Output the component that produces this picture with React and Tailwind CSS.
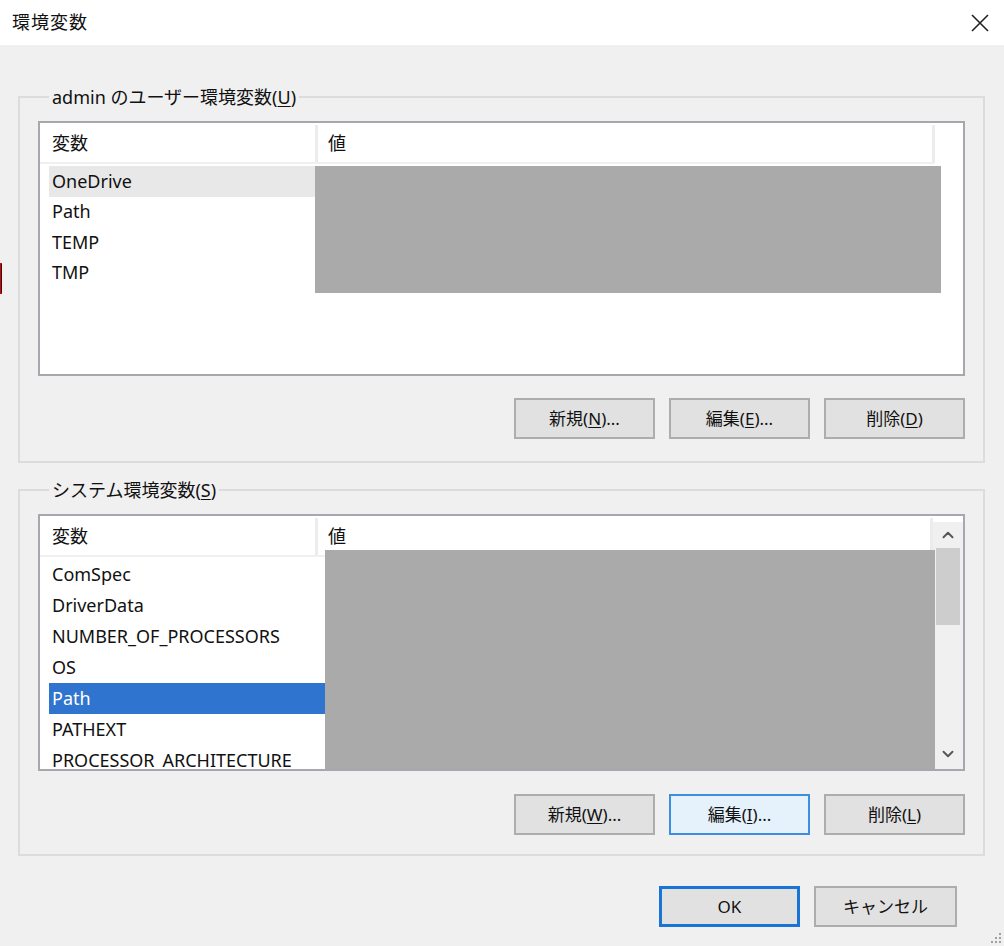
import { ChevronUp, ChevronDown } from "lucide-react"

const userVars = ["OneDrive", "Path", "TEMP", "TMP"]
const systemVars = [
  "ComSpec",
  "DriverData",
  "NUMBER_OF_PROCESSORS",
  "OS",
  "Path",
  "PATHEXT",
  "PROCESSOR_ARCHITECTURE",
]

function Mnemonic({ label, keyChar, dots }) {
  return (
    <span>
      {label}(<span className="underline underline-offset-2">{keyChar}</span>){dots ? "..." : ""}
    </span>
  )
}

function DialogButton({ children, variant = "normal", className = "" }) {
  const styles = {
    normal: "bg-[#e1e1e1] border-2 border-[#adadad]",
    focused: "bg-[#e5f1fb] border-2 border-[#3d8ee0]",
    default: "bg-[#e1e1e1] border-[3px] border-[#1a73d6]",
  }
  return (
    <button
      className={`w-[141px] h-[41px] flex items-center justify-center text-[17px] text-[#111] ${styles[variant]} ${className}`}
    >
      {children}
    </button>
  )
}

function ListHeader({ width }) {
  return (
    <div className={`flex h-[41px] pt-[2px] border-b-2 border-[#f0f0f0] ${width}`}>
      <div className="w-[278px] pl-[12px] flex items-center border-r-[3px] border-[#ececec]">変数</div>
      <div className="flex-1 pl-[10px] flex items-center border-r-[3px] border-[#ececec]">値</div>
    </div>
  )
}

function VarRow({ name, state, height }) {
  const bg =
    state === "hot"
      ? "bg-[#e8e8e8]"
      : state === "selected"
        ? "bg-[#2f74cf] text-white"
        : ""
  return (
    <div className={`ml-[9px] w-[886px] pl-[3px] flex items-center whitespace-nowrap ${height} ${bg}`}>
      {name}
    </div>
  )
}

export default function App() {
  return (
    <div
      className="relative w-[1004px] h-[946px] bg-[#f0f0f0] overflow-hidden text-[18px] text-[#111]"
      style={{ fontFamily: '"Noto Sans", "Noto Sans CJK JP", sans-serif' }}
    >
      {/* title bar */}
      <div className="h-[45px] bg-white flex items-center justify-between pl-[12px] pr-[12px]">
        <span className="text-[18px] tracking-[1px]">環境変数</span>
        <svg width="20" height="20" viewBox="0 0 20 20" className="mr-[2px]">
          <path d="M2 2 L18 18 M18 2 L2 18" stroke="#222" strokeWidth="1.6" />
        </svg>
      </div>

      <div className="pl-[18px] pr-[19px] pt-[40px]">
        {/* user variables */}
        <fieldset className="min-w-0 border-2 border-[#dcdcdc] pl-[18px] pr-[18px] pt-[12px] pb-[22px]">
          <legend className="ml-[11px] px-[3px] leading-[24px]">
            admin のユーザー環境変数(<span className="underline underline-offset-2">U</span>)
          </legend>
          <div className="relative h-[255px] border-2 border-[#a6a8ad] bg-white">
            <ListHeader width="w-[895px]" />
            <div className="mt-[2px]">
              {userVars.map((v, i) => (
                <VarRow key={v} name={v} state={i === 0 ? "hot" : ""} height="h-[30.5px]" />
              ))}
            </div>
            <div className="absolute left-[275px] top-[43px] w-[626px] h-[127px] bg-[#aaaaaa]" />
          </div>
          <div className="flex justify-end gap-[14px] mt-[22px]">
            <DialogButton>
              <Mnemonic label="新規" keyChar="N" dots />
            </DialogButton>
            <DialogButton>
              <Mnemonic label="編集" keyChar="E" dots />
            </DialogButton>
            <DialogButton>
              <Mnemonic label="削除" keyChar="D" />
            </DialogButton>
          </div>
        </fieldset>

        {/* system variables */}
        <fieldset className="min-w-0 mt-[15px] border-2 border-[#dcdcdc] pl-[18px] pr-[18px] pt-[12px] pb-[19px]">
          <legend className="ml-[11px] px-[3px] leading-[24px]">
            システム環境変数(<span className="underline underline-offset-2">S</span>)
          </legend>
          <div className="relative h-[257px] border-2 border-[#a6a8ad] bg-white flex overflow-hidden">
            <div className="flex-1 min-w-0 overflow-hidden">
              <ListHeader width="w-[893px]" />
              <div className="mt-[2px]">
                {systemVars.map((v) => (
                  <VarRow key={v} name={v} state={v === "Path" ? "selected" : ""} height="h-[31px]" />
                ))}
              </div>
            </div>
            {/* scrollbar */}
            <div className="w-[30px] shrink-0 mt-[6px] bg-[#f0f0f0] flex flex-col items-center">
              <ChevronUp size={18} strokeWidth={2.5} className="text-[#555] mt-[4px]" />
              <div className="w-[24px] h-[77px] bg-[#cdcdcd] mt-[4px]" />
              <div className="flex-1" />
              <ChevronDown size={18} strokeWidth={2.5} className="text-[#555] mb-[6px]" />
            </div>
            <div className="absolute left-[285px] top-[34px] w-[610px] h-[221px] bg-[#aaaaaa]" />
          </div>
          <div className="flex justify-end gap-[14px] mt-[23px]">
            <DialogButton>
              <Mnemonic label="新規" keyChar="W" dots />
            </DialogButton>
            <DialogButton variant="focused">
              <Mnemonic label="編集" keyChar="I" dots />
            </DialogButton>
            <DialogButton>
              <Mnemonic label="削除" keyChar="L" />
            </DialogButton>
          </div>
        </fieldset>

        {/* dialog buttons */}
        <div className="flex justify-end gap-[14px] mt-[30px] pr-[28px]">
          <DialogButton variant="default" className="w-[140px] h-[40px]">OK</DialogButton>
          <DialogButton className="w-[143px] h-[40px]">キャンセル</DialogButton>
        </div>
      </div>

      {/* size grip */}
      <svg width="14" height="14" viewBox="0 0 14 14" className="absolute right-[2px] bottom-[2px]">
        {[
          [11, 3],
          [11, 7],
          [7, 7],
          [11, 11],
          [7, 11],
          [3, 11],
        ].map(([x, y]) => (
          <rect key={`${x}-${y}`} x={x} y={y} width="2" height="2" fill="#a0a0a0" />
        ))}
      </svg>

      {/* edge marker */}
      <div className="absolute left-0 top-[263px] w-[2px] h-[31px] bg-[#1a1a1a] border-l border-y border-[#e00000]" />
    </div>
  )
}
